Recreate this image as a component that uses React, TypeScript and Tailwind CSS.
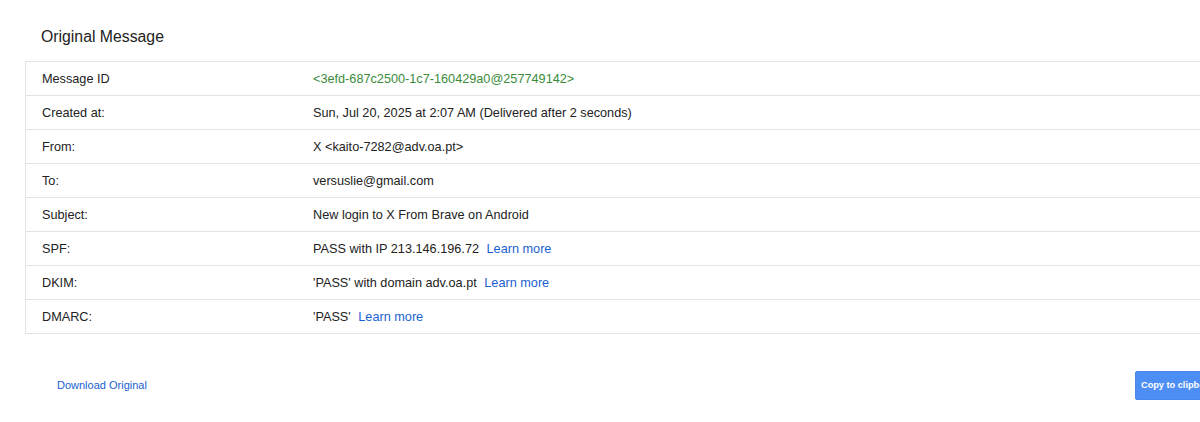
import React from 'react';

type Row = { label: string; value: React.ReactNode };

const Learn = () => (
  <a href="#" className="ml-[4px] text-[#1a5fd1] no-underline">
    Learn more
  </a>
);

const rows: Row[] = [
  { label: 'Message ID', value: <span className="text-[#3b8b3b]">&lt;3efd-687c2500-1c7-160429a0@257749142&gt;</span> },
  { label: 'Created at:', value: 'Sun, Jul 20, 2025 at 2:07 AM (Delivered after 2 seconds)' },
  { label: 'From:', value: 'X <kaito-7282@adv.oa.pt>' },
  { label: 'To:', value: 'versuslie@gmail.com' },
  { label: 'Subject:', value: 'New login to X From Brave on Android' },
  { label: 'SPF:', value: <>PASS with IP 213.146.196.72 <Learn /></> },
  { label: 'DKIM:', value: <>'PASS' with domain adv.oa.pt <Learn /></> },
  { label: 'DMARC:', value: <>'PASS' <Learn /></> },
];

export default function App() {
  return (
    <div
      className="w-[1200px] h-[422px] overflow-hidden bg-white text-[#222]"
      style={{ fontFamily: '"Liberation Sans", Arial, sans-serif' }}
    >
      <div className="w-[1300px]">
        <h1 className="pl-[41px] pt-[26px] h-[61px] text-[15.8px] leading-[22px] text-[#222]">Original Message</h1>
        <div className="ml-[25px] border-l border-t border-[#e3e3e3]">
          {rows.map((r) => (
            <div key={r.label} className="flex h-[34px] items-center pt-[2px] border-b border-[#e3e3e3] text-[12.7px]">
              <div className="w-[287px] pl-[16px]">{r.label}</div>
              <div>{r.value}</div>
            </div>
          ))}
        </div>
        <div className="flex items-center justify-between mt-[37px] pl-[57px]">
          <a href="#" className="text-[11px] text-[#1a5fd1] no-underline">
            Download Original
          </a>
          <button className="mr-[40px] h-[29px] w-[125px] rounded-[2px] bg-[#4d8ef5] border border-[#4a86e8] text-white text-[9.2px] font-bold text-left pl-[5px] pt-[1px]">
            Copy to clipboard
          </button>
        </div>
      </div>
    </div>
  );
}
